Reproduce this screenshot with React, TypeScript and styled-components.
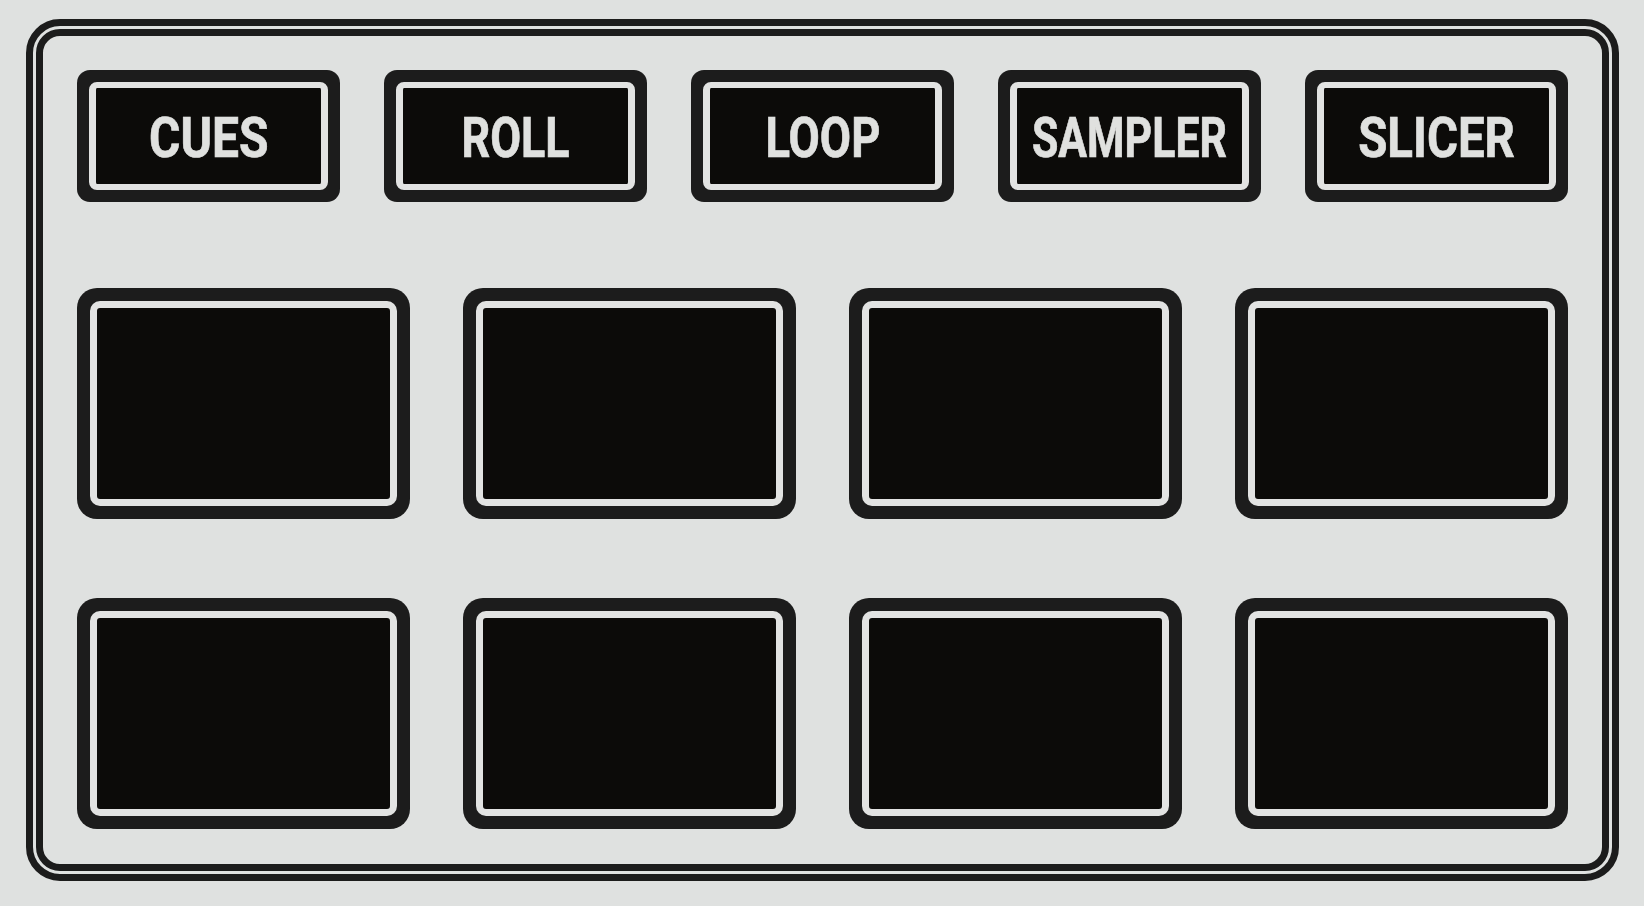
import React from "react";
import styled, { createGlobalStyle } from "styled-components";

const GlobalStyle = createGlobalStyle`
  html, body {
    margin: 0;
    padding: 0;
    background: #dfe1e0;
  }
  * { box-sizing: border-box; }
`;

const Page = styled.div`
  width: 1644px;
  height: 906px;
  padding: 19px 25px 25px 26px;
  background: #dfe1e0;
`;

const Frame = styled.div`
  width: 1593px;
  height: 862px;
  border: 7px solid #1c1c1c;
  border-radius: 34px;
  padding: 3px;
`;

const Panel = styled.div`
  height: 100%;
  border: 7px solid #1c1c1c;
  border-radius: 24px;
  padding: 34px 34px 35px;
  display: flex;
  flex-direction: column;
  gap: 86px;
`;

const ModeRow = styled.div`
  display: flex;
  justify-content: space-between;
`;

const ModeButton = styled.div`
  width: 263px;
  height: 132px;
  background: #1c1c1c;
  border-radius: 13px;
  padding: 12px;
`;

const ModeFace = styled.div`
  height: 100%;
  background: #0c0b09;
  border: 6px solid #e2e3e2;
  border-left-width: 7px;
  border-right-width: 7px;
  border-radius: 8px;
  display: flex;
  align-items: center;
  justify-content: center;
  padding-top: 4px;
`;

const ModeLabel = styled.span<{ $squeeze: number }>`
  display: inline-block;
  font-family: Roboto, "Liberation Sans", sans-serif;
  font-weight: 700;
  font-size: 56px;
  line-height: 1;
  color: #e0e1df;
  -webkit-text-stroke: 0.7px #e0e1df;
  transform: scaleX(${(p) => p.$squeeze});
  white-space: nowrap;
`;

const PadGrid = styled.div`
  display: grid;
  grid-template-columns: repeat(4, 333px);
  grid-auto-rows: 231px;
  column-gap: 53px;
  row-gap: 79px;
`;

const Pad = styled.div`
  background: #1c1c1c;
  border-radius: 20px;
  padding: 13px;
`;

const PadFace = styled.div`
  height: 100%;
  background: #0c0b09;
  border: 7px solid #e2e3e2;
  border-radius: 10px;
`;

const modes = [
  { label: "CUES", squeeze: 0.855 },
  { label: "ROLL", squeeze: 0.8 },
  { label: "LOOP", squeeze: 0.81 },
  { label: "SAMPLER", squeeze: 0.765 },
  { label: "SLICER", squeeze: 0.847 },
];

export default function App() {
  return (
    <>
      <GlobalStyle />
      <Page>
        <Frame>
          <Panel>
            <ModeRow>
              {modes.map((m) => (
                <ModeButton key={m.label}>
                  <ModeFace>
                    <ModeLabel $squeeze={m.squeeze}>{m.label}</ModeLabel>
                  </ModeFace>
                </ModeButton>
              ))}
            </ModeRow>
            <PadGrid>
              {Array.from({ length: 8 }).map((_, i) => (
                <Pad key={i}>
                  <PadFace />
                </Pad>
              ))}
            </PadGrid>
          </Panel>
        </Frame>
      </Page>
    </>
  );
}
